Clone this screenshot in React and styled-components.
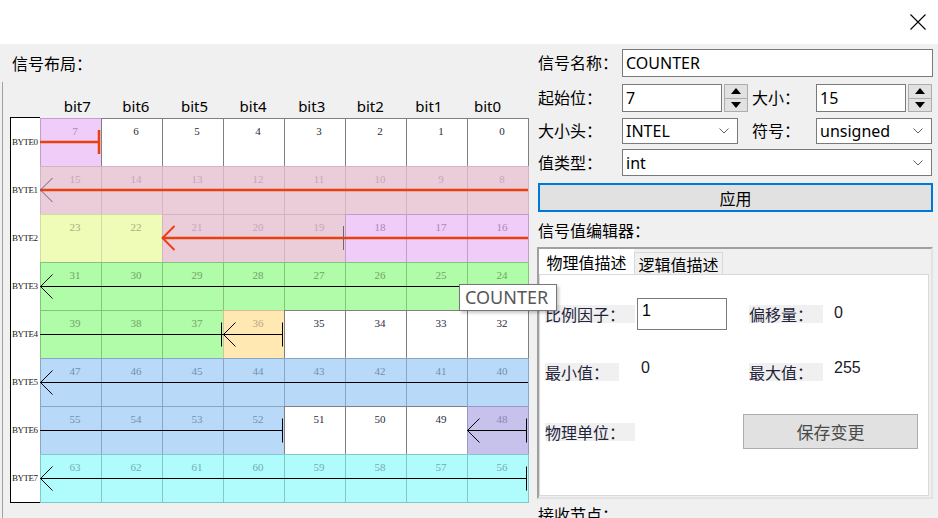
import React from 'react';
import styled, { createGlobalStyle } from 'styled-components';

const GlobalStyle = createGlobalStyle`
  html, body {
    margin: 0;
    padding: 0;
    background: #f0f0f0;
  }
  * {
    box-sizing: border-box;
  }
`;

const UI_FONT = `"Noto Sans", "Noto Sans CJK SC", sans-serif`;

const colors = {
  W: { bg: '#ffffff', bd: '#808080', fg: '#2a2a3a' },
  P: { bg: '#f0ccf8', bd: '#c49ccc', fg: '#a888b8' },
  R: { bg: '#eacdd9', bd: '#d6b2c2', fg: '#c6a6b6' },
  Y: { bg: '#eefcb8', bd: '#d2dca2', fg: '#a8b07c' },
  G: { bg: '#b0fca8', bd: '#84c47c', fg: '#6ea466' },
  O: { bg: '#ffe8b2', bd: '#d8c092', fg: '#c0a47c' },
  B: { bg: '#b8daf8', bd: '#88a6c6', fg: '#7090b0' },
  L: { bg: '#c6c2ec', bd: '#9c96c6', fg: '#8c86b4' },
  C: { bg: '#b0fcfc', bd: '#82c8c8', fg: '#70acb4' },
};

const layout = [
  'PWWWWWWW',
  'RRRRRRRR',
  'YYRRRPPP',
  'GGGGGGGG',
  'GGGOWWWW',
  'BBBBBBBB',
  'BBBBWWWL',
  'CCCCCCCC',
];

const Window = styled.div`
  position: relative;
  width: 938px;
  height: 518px;
  overflow: hidden;
  background: #f0f0f0;
  display: flex;
  flex-direction: column;
  font-family: ${UI_FONT};
  color: #000;
`;

const TitleBar = styled.div`
  height: 44px;
  flex: none;
  background: #fff;
  display: flex;
  justify-content: flex-end;
  align-items: flex-start;
`;

const CloseButton = styled.div`
  width: 16px;
  height: 16px;
  margin: 14px 12px 0 0;
  svg { display: block; }
`;

const Main = styled.div`
  flex: 1;
  display: flex;
  min-height: 0;
`;

const LeftPanel = styled.div`
  width: 538px;
  flex: none;
  display: flex;
  flex-direction: column;
`;

const PanelTitle = styled.div`
  padding: 8px 0 0 12px;
  font-size: 16px;
  line-height: 24px;
`;

const Frame = styled.div`
  flex: 1;
  margin: 6px 0 0 2px;
  border-left: 1px solid #a0a0a0;
  padding: 12px 0 0 7px;
`;

const BitHeader = styled.div`
  display: grid;
  grid-template-columns: repeat(8, 58.6px);
  height: 24px;
  padding-left: 38px;
`;

const BitName = styled.div`
  text-align: center;
  font-family: "Noto Sans", sans-serif;
  font-size: 15px;
  line-height: 24px;
`;

const Layout = styled.div`
  position: relative;
  display: flex;
  width: 518px;
`;

const ByteColumn = styled.div`
  width: 30px;
  border: 1px solid #000;
  border-right: none;
  background: #fff;
  display: grid;
  grid-template-rows: repeat(8, 48px);
  margin-top: -1px;
  height: 386px;
`;

const ByteName = styled.div`
  display: flex;
  align-items: center;
  padding-left: 1px;
  font-family: "Liberation Serif", serif;
  font-size: 9px;
  letter-spacing: -0.5px;
  color: #222;
`;

const Cells = styled.div`
  display: grid;
  grid-template-columns: repeat(8, 61px);
  grid-template-rows: repeat(8, 48px);
`;

const Cell = styled.div`
  background: ${p => p.$c.bg};
  border: 1px solid ${p => p.$c.bd};
  margin: 0 -1px -1px 0;
  color: ${p => p.$c.fg};
  font-family: "Liberation Serif", serif;
  font-size: 11px;
  line-height: 14px;
  text-align: center;
  padding: 5px 0 0 8px;
`;

const Arrows = styled.svg`
  position: absolute;
  left: 30px;
  top: 0;
  pointer-events: none;
`;

const RightPanel = styled.div`
  width: 395px;
  flex: none;
  display: flex;
  flex-direction: column;
  padding-top: 5px;
  & > * { flex: none; }
`;

const Row = styled.div`
  display: flex;
  align-items: center;
  height: ${p => p.$h}px;
  margin-bottom: ${p => p.$mb || 0}px;
`;

const Label = styled.div`
  width: ${p => p.$w}px;
  margin-left: ${p => p.$ml || 0}px;
  flex: none;
  font-size: 16px;
  line-height: 20px;
`;

const Box = styled.div`
  width: ${p => p.$w}px;
  height: 100%;
  flex: none;
  border: 1px solid #7a7a7a;
  background: #fff;
  display: flex;
  align-items: center;
  justify-content: space-between;
  padding: 0 8px 0 3px;
  font-size: 16px;
  white-space: nowrap;
`;

const Spinner = styled.div`
  width: 24px;
  height: 28px;
  margin-left: 2px;
  flex: none;
  display: flex;
  flex-direction: column;
`;

const SpinButton = styled.div`
  flex: 1;
  background: #e1e1e1;
  border: 1px solid #adadad;
  & + & { border-top: none; }
  display: flex;
  align-items: center;
  justify-content: center;
`;

const ApplyButton = styled.div`
  height: 29px;
  border: 2px solid #0078d7;
  background: #e1e1e1;
  display: flex;
  align-items: center;
  justify-content: center;
  font-size: 16px;
`;

const SectionLabel = styled.div`
  height: ${p => p.$h}px;
  display: flex;
  align-items: center;
  font-size: 16px;
`;

const Group = styled.div`
  height: 252px;
  margin-left: -1px;
  border: 2px solid #a0a0a0;
  border-right-color: #e3e3e3;
  border-bottom-color: #e3e3e3;
  padding: 0 2px 1px 0;
  display: flex;
  flex-direction: column;
`;

const TabBar = styled.div`
  display: flex;
  align-items: flex-end;
  height: 25px;
  flex: none;
`;

const Tab = styled.div`
  width: ${p => p.$w}px;
  height: ${p => (p.$active ? 25 : 22)}px;
  background: ${p => (p.$active ? '#fff' : '#f0f0f0')};
  border: 1px solid ${p => (p.$active ? '#fff' : '#d9d9d9')};
  border-bottom: none;
  display: flex;
  align-items: center;
  justify-content: center;
  font-size: 16px;
`;

const Pane = styled.div`
  flex: 1;
  background: #fff;
  border: 1px solid #d9d9d9;
  display: grid;
  grid-template-columns: 204px 1fr;
  grid-template-rows: 32px 32px 35px;
  row-gap: 26px;
  align-content: start;
  padding: 23px 0 0 5px;
`;

const Field = styled.div`
  display: flex;
  align-items: center;
`;

const FieldLabel = styled.div`
  width: ${p => p.$w}px;
  height: 18px;
  flex: none;
  background: #f0f0f0;
  font-family: "Noto Sans CJK SC", sans-serif;
  font-size: 16px;
  line-height: 18px;
  color: #23233a;
  white-space: nowrap;
`;

const FieldInput = styled.div`
  width: 90px;
  height: 32px;
  margin-left: 2px;
  border: 1px solid #7a7a7a;
  padding: 3px 0 0 4px;
  font-family: "Liberation Sans", sans-serif;
  font-size: 16px;
`;

const FieldValue = styled.div`
  margin-left: ${p => p.$ml}px;
  margin-bottom: ${p => p.$up || 0}px;
  font-family: "Liberation Sans", sans-serif;
  font-size: 16px;
  line-height: 18px;
  color: #1a1a2a;
`;

const SaveButton = styled.div`
  width: 175px;
  height: 35px;
  margin-left: -6px;
  background: #e1e1e1;
  border: 1px solid #adadad;
  display: flex;
  align-items: center;
  justify-content: center;
  font-family: "Noto Sans CJK SC", sans-serif;
  font-size: 17px;
  color: #4a4a4a;
`;

const Tooltip = styled.div`
  position: absolute;
  left: 459px;
  top: 284px;
  width: 98px;
  height: 27px;
  background: #fff;
  border: 1px solid #767676;
  box-shadow: 2px 2px 3px rgba(0, 0, 0, 0.22);
  padding-left: 5px;
  font-family: "Noto Sans", sans-serif;
  font-size: 18px;
  line-height: 25px;
  color: #575757;
`;

const Chevron = () => (
  <svg width="10" height="6" viewBox="0 0 10 6">
    <path d="M0.5 0.5 L5 5 L9.5 0.5" fill="none" stroke="#606060" strokeWidth="1" />
  </svg>
);

const Tri = ({ up }) => (
  <svg width="10" height="6" viewBox="0 0 10 6">
    <polygon points={up ? '5,0 10,6 0,6' : '0,0 10,0 5,6'} fill="#000" />
  </svg>
);

const Combo = ({ w, children }) => (
  <Box $w={w}>
    <span>{children}</span>
    <Chevron />
  </Box>
);

const Spin = () => (
  <Spinner>
    <SpinButton><Tri up /></SpinButton>
    <SpinButton><Tri /></SpinButton>
  </Spinner>
);

const RED = '#e8400e';

const Head = ({ x, y, color = '#000', w = 1 }) => (
  <path d={`M${x + 12} ${y - 12} L${x} ${y} L${x + 12} ${y + 12}`} fill="none" stroke={color} strokeWidth={w} />
);

const Tick = ({ x, y, color = '#000', w = 1 }) => (
  <line x1={x} y1={y - 12} x2={x} y2={y + 12} stroke={color} strokeWidth={w} />
);

const Hline = ({ x1, x2, y, color = '#000', w = 1 }) => (
  <line x1={x1} y1={y} x2={x2} y2={y} stroke={color} strokeWidth={w} />
);

const SignalArrows = () => (
  <Arrows width="488" height="384" viewBox="0 0 488 384">
    <Hline x1={0} x2={59} y={24} color={RED} w={2.5} />
    <Tick x={59} y={24} color={RED} w={2.5} />

    <Hline x1={0} x2={488} y={72} color={RED} w={2.5} />
    <Head x={0.5} y={72} color="#705a88" />

    <Hline x1={122} x2={488} y={120} color={RED} w={2.5} />
    <Head x={122.5} y={120} color={RED} w={2} />
    <Tick x={303.5} y={120} color="#6a6a6a" />

    <Hline x1={0} x2={488} y={168.5} />
    <Head x={0.5} y={168.5} />

    <Hline x1={0} x2={243} y={216.5} />
    <Tick x={181.5} y={216.5} />
    <Head x={183.5} y={216.5} />
    <Tick x={242.5} y={216.5} />

    <Hline x1={0} x2={488} y={264.5} />
    <Head x={0.5} y={264.5} />

    <Hline x1={0} x2={243} y={312.5} />
    <Tick x={242.5} y={312.5} />
    <Hline x1={427} x2={487} y={312.5} />
    <Head x={427.5} y={312.5} />
    <Tick x={486.5} y={312.5} />

    <Hline x1={0} x2={487} y={360.5} />
    <Head x={0.5} y={360.5} />
    <Tick x={486.5} y={360.5} />
  </Arrows>
);

const bits = ['bit7', 'bit6', 'bit5', 'bit4', 'bit3', 'bit2', 'bit1', 'bit0'];

export default function App() {
  return (
    <>
      <GlobalStyle />
      <Window>
        <TitleBar>
          <CloseButton>
            <svg width="16" height="16" viewBox="0 0 16 16">
              <path d="M0.5 0.5 L15.5 15.5 M15.5 0.5 L0.5 15.5" stroke="#000" strokeWidth="1.1" fill="none" />
            </svg>
          </CloseButton>
        </TitleBar>
        <Main>
          <LeftPanel>
            <PanelTitle>信号布局：</PanelTitle>
            <Frame>
              <BitHeader>
                {bits.map(b => <BitName key={b}>{b}</BitName>)}
              </BitHeader>
              <Layout>
                <ByteColumn>
                  {layout.map((_, r) => <ByteName key={r}>BYTE{r}</ByteName>)}
                </ByteColumn>
                <Cells>
                  {layout.map((row, r) =>
                    row.split('').map((k, c) => (
                      <Cell key={`${r}-${c}`} $c={colors[k]}>{r * 8 + (7 - c)}</Cell>
                    ))
                  )}
                </Cells>
                <SignalArrows />
              </Layout>
            </Frame>
          </LeftPanel>

          <RightPanel>
            <Row $h={28} $mb={7}>
              <Label $w={84}>信号名称：</Label>
              <Box $w={311}>COUNTER</Box>
            </Row>
            <Row $h={28} $mb={6}>
              <Label $w={84}>起始位：</Label>
              <Box $w={100}>7</Box>
              <Spin />
              <Label $w={64} $ml={4}>大小：</Label>
              <Box $w={90}>15</Box>
              <Spin />
            </Row>
            <Row $h={26} $mb={5}>
              <Label $w={84}>大小头：</Label>
              <Combo w={116}>INTEL</Combo>
              <Label $w={64} $ml={14}>符号：</Label>
              <Combo w={116}>unsigned</Combo>
            </Row>
            <Row $h={27} $mb={7}>
              <Label $w={84}>值类型：</Label>
              <Combo w={310}>int</Combo>
            </Row>
            <ApplyButton>应用</ApplyButton>
            <SectionLabel $h={35}>信号值编辑器：</SectionLabel>
            <Group>
              <TabBar>
                <Tab $active $w={95}>物理值描述</Tab>
                <Tab $w={89}>逻辑值描述</Tab>
              </TabBar>
              <Pane>
                <Field>
                  <FieldLabel $w={90}>比例因子：</FieldLabel>
                  <FieldInput>1</FieldInput>
                </Field>
                <Field>
                  <FieldLabel $w={74}>偏移量：</FieldLabel>
                  <FieldValue $ml={11} $up={2}>0</FieldValue>
                </Field>
                <Field>
                  <FieldLabel $w={74}>最小值：</FieldLabel>
                  <FieldValue $ml={22} $up={8}>0</FieldValue>
                </Field>
                <Field>
                  <FieldLabel $w={74}>最大值：</FieldLabel>
                  <FieldValue $ml={11} $up={8}>255</FieldValue>
                </Field>
                <Field>
                  <FieldLabel $w={90}>物理单位：</FieldLabel>
                </Field>
                <Field>
                  <SaveButton>保存变更</SaveButton>
                </Field>
              </Pane>
            </Group>
            <SectionLabel $h={30}>接收节点：</SectionLabel>
          </RightPanel>
        </Main>
        <Tooltip>COUNTER</Tooltip>
      </Window>
    </>
  );
}
